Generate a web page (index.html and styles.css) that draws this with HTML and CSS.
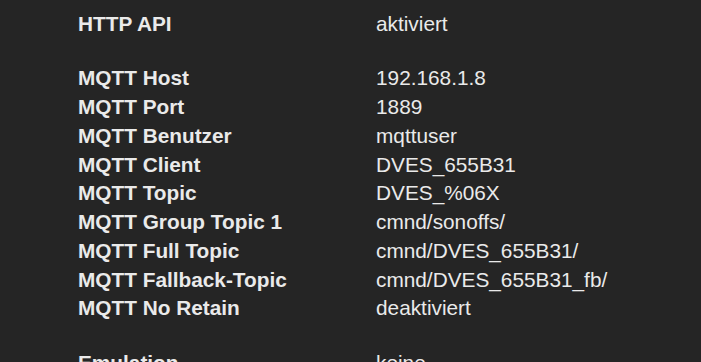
FILE: index.html
```html
<!DOCTYPE html>
<html lang="de">
<head>
    <meta charset="UTF-8">
    <meta name="viewport" content="width=device-width, initial-scale=1.0">
    <title>Informationen</title>
    <link rel="stylesheet" href="styles.css">
</head>
<body>
    <div class="info">
        <div class="info-group">
            <div class="info-row"><span class="info-key">HTTP API</span><span class="info-val">aktiviert</span></div>
        </div>
        <div class="info-group">
            <div class="info-row"><span class="info-key">MQTT Host</span><span class="info-val">192.168.1.8</span></div>
            <div class="info-row"><span class="info-key">MQTT Port</span><span class="info-val">1889</span></div>
            <div class="info-row"><span class="info-key">MQTT Benutzer</span><span class="info-val">mqttuser</span></div>
            <div class="info-row"><span class="info-key">MQTT Client</span><span class="info-val">DVES_655B31</span></div>
            <div class="info-row"><span class="info-key">MQTT Topic</span><span class="info-val">DVES_%06X</span></div>
            <div class="info-row"><span class="info-key">MQTT Group Topic 1</span><span class="info-val">cmnd/sonoffs/</span></div>
            <div class="info-row"><span class="info-key">MQTT Full Topic</span><span class="info-val">cmnd/DVES_655B31/</span></div>
            <div class="info-row"><span class="info-key">MQTT Fallback-Topic</span><span class="info-val">cmnd/DVES_655B31_fb/</span></div>
            <div class="info-row"><span class="info-key">MQTT No Retain</span><span class="info-val">deaktiviert</span></div>
        </div>
        <div class="info-group">
            <div class="info-row"><span class="info-key">Emulation</span><span class="info-val">keine</span></div>
        </div>
    </div>
</body>
</html>
```

FILE: styles.css
```css
* {
    margin: 0;
    padding: 0;
    box-sizing: border-box;
}

body {
    background: #252525;
    color: #eaeaea;
    font-family: 'Liberation Sans', Arial, sans-serif;
    font-size: 20.8px;
    overflow: hidden;
}

.info {
    padding: 10px 0 0 78px;
    display: flex;
    flex-direction: column;
    gap: 25.5px;
}

.info-row {
    display: grid;
    grid-template-columns: 298px 1fr;
    height: 28.75px;
    line-height: 28.75px;
    white-space: nowrap;
}

.info-key {
    font-weight: bold;
}
```
